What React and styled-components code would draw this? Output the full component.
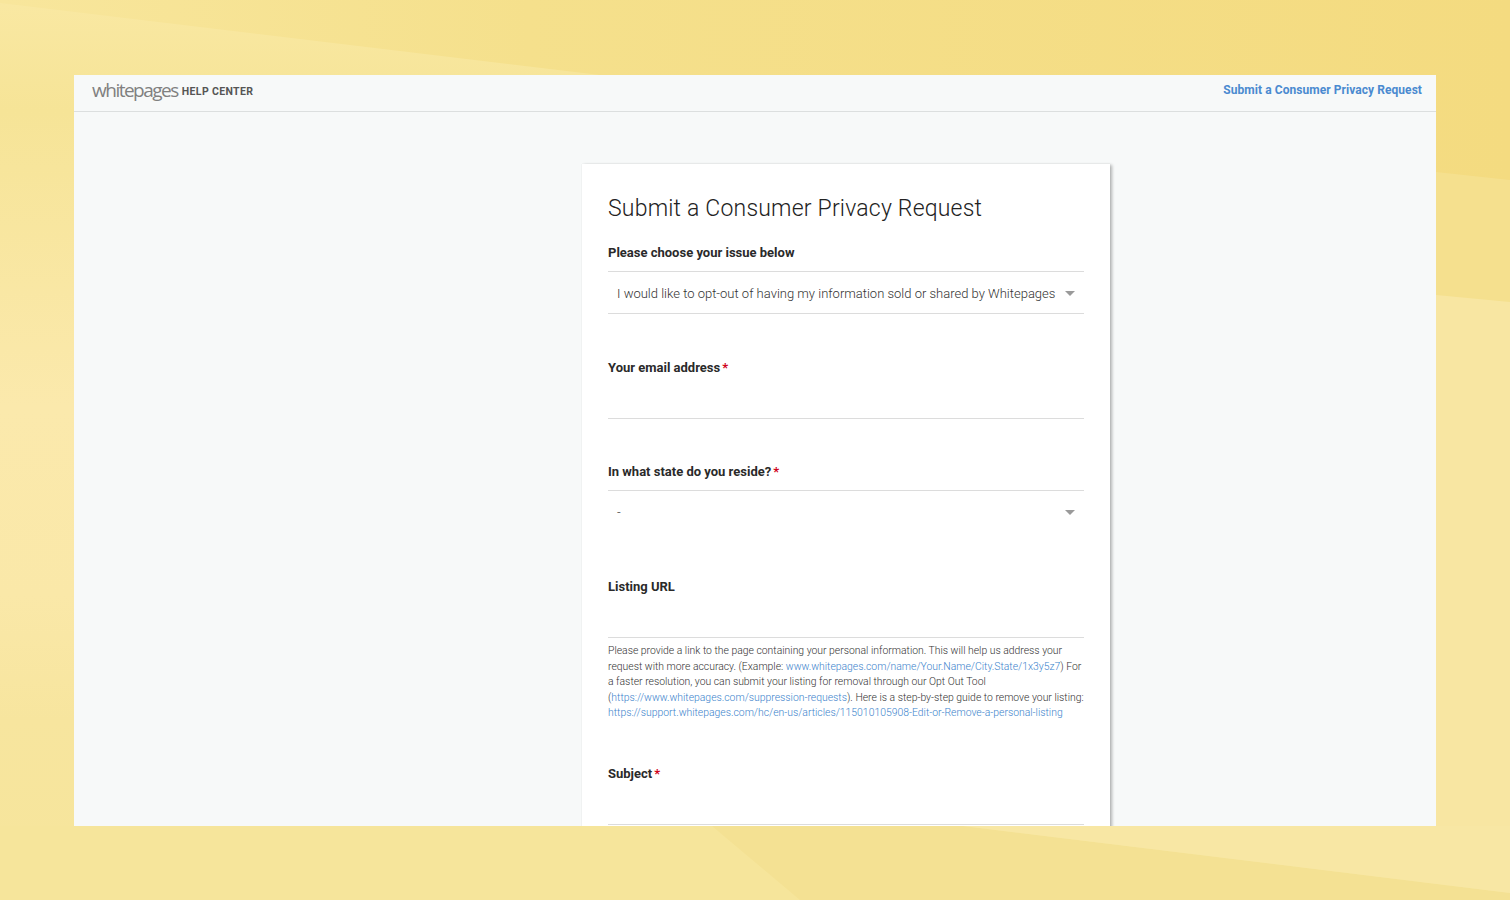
import styled, { createGlobalStyle } from 'styled-components'

const GlobalStyle = createGlobalStyle`
    html, body {
        margin: 0;
        height: 100%;
    }
    body {
        font-family: Roboto, "Liberation Sans", sans-serif;
        background: #f5e08c;
        overflow: hidden;
    }
`

const Backdrop = () => (
    <BackdropSvg viewBox="0 0 1510 900" preserveAspectRatio="none" aria-hidden="true">
        <defs>
            <linearGradient id="topBand" x1="0" x2="1" y1="0" y2="0">
                <stop offset="0" stopColor="#f8e69c" />
                <stop offset="0.35" stopColor="#f5e08c" />
                <stop offset="1" stopColor="#f4db80" />
            </linearGradient>
            <linearGradient id="leftBand" x1="0" x2="0" y1="0" y2="1">
                <stop offset="0" stopColor="#f9e8a2" />
                <stop offset="0.12" stopColor="#f6e497" />
                <stop offset="0.45" stopColor="#fbe9ac" />
                <stop offset="0.66" stopColor="#fae8a8" />
                <stop offset="0.8" stopColor="#f7e59e" />
                <stop offset="1" stopColor="#f6e59b" />
            </linearGradient>
        </defs>
        <rect width="1510" height="900" fill="url(#topBand)" />
        <polygon points="0,3 600,75 74,75 74,900 0,900" fill="url(#leftBand)" />
        <polygon points="1436,172 1510,180 1510,900 1436,900" fill="#f5e08e" />
        <polygon points="1436,295 1510,302 1510,900 1436,900" fill="#f8e6a2" />
        <rect y="826" width="1510" height="74" fill="#f6e59b" />
        <polygon points="712,826 963,826 1510,893 1510,900 800,900" fill="#f4e193" />
        <polygon points="963,826 1510,826 1510,893" fill="#f8e7a4" />
    </BackdropSvg>
)

const Logo = () => (
    <LogoWrap>
        <LogoWord>whitepages</LogoWord>
        <LogoSub>HELP CENTER</LogoSub>
    </LogoWrap>
)

const Caret = () => (
    <CaretSvg viewBox="0 0 10 5" aria-hidden="true">
        <polygon points="0,0 10,0 5,5" fill="#9a9a9a" />
    </CaretSvg>
)

const App = () => {
    return (
        <>
            <GlobalStyle />
            <Backdrop />
            <Stage>
                <Window>
                    <TopBar>
                        <Logo />
                        <TopLink href="#">Submit a Consumer Privacy Request</TopLink>
                    </TopBar>
                    <Content>
                        <Card>
                            <Title>Submit a Consumer Privacy Request</Title>

                            <Label>Please choose your issue below</Label>
                            <Select $closed>
                                <SelectText>I would like to opt-out of having my information sold or shared by Whitepages</SelectText>
                                <Caret />
                            </Select>

                            <Label $top={44}>Your email address<Star>*</Star></Label>
                            <TextInput />

                            <Label $top={43}>In what state do you reside?<Star>*</Star></Label>
                            <Select>
                                <SelectText>-</SelectText>
                                <Caret />
                            </Select>

                            <Label $top={44}>Listing URL</Label>
                            <TextInput />
                            <Help>
                                Please provide a link to the page containing your personal information. This will help us address your
                                request with more accuracy. (Example: <HelpLink href="#">www.whitepages.com/name/Your.Name/City.State/1x3y5z7</HelpLink>) For
                                a faster resolution, you can submit your listing for removal through our Opt Out Tool
                                (<HelpLink href="#">https://www.whitepages.com/suppression-requests</HelpLink>). Here is a step-by-step guide to remove your listing:
                                {' '}<HelpLink href="#">https://support.whitepages.com/hc/en-us/articles/115010105908-Edit-or-Remove-a-personal-listing</HelpLink>
                            </Help>

                            <Label $top={43}>Subject<Star>*</Star></Label>
                            <TextInput />
                        </Card>
                    </Content>
                </Window>
            </Stage>
        </>
    )
}

const BackdropSvg = styled.svg`
    position: fixed;
    inset: 0;
    width: 100%;
    height: 100%;
`
const Stage = styled.div`
    position: relative;
    height: 900px;
    padding: 75px 74px 74px;
    box-sizing: border-box;
`
const Window = styled.div`
    height: 751px;
    background: #f7f9f9;
    overflow: hidden;
`
const TopBar = styled.header`
    height: 36px;
    border-bottom: 1px solid #dcdfdf;
    display: flex;
    align-items: flex-start;
    justify-content: space-between;
    padding: 0 14px 0 18px;
`
const LogoWrap = styled.div`
    display: flex;
    align-items: center;
    gap: 4px;
    height: 31px;
`
const LogoWord = styled.span`
    padding-bottom: 2px;
    font-family: "Open Sans", Lato, sans-serif;
    font-size: 19px;
    line-height: 28px;
    letter-spacing: -1.5px;
    color: #808080;
`
const LogoSub = styled.span`
    padding-top: 2px;
    font-size: 10.5px;
    font-weight: 700;
    letter-spacing: 0.35px;
    color: #555;
`
const TopLink = styled.a`
    font-size: 12px;
    font-weight: 700;
    line-height: 30px;
    letter-spacing: 0.06px;
    color: #4a8ad0;
    text-decoration: none;
`
const Content = styled.main`
    display: flex;
    padding: 52px 0 0 508px;
`
const Card = styled.section`
    width: 528px;
    flex: none;
    box-sizing: border-box;
    padding: 29px 26px 40px;
    background: #fff;
    box-shadow: 2px 1px 3px rgba(0, 0, 0, 0.28), 0 0 1px rgba(0, 0, 0, 0.1);
`
const Title = styled.h1`
    margin: 0 0 18px;
    font-size: 23px;
    line-height: 32px;
    font-weight: 300;
    letter-spacing: 0.2px;
    color: #222;
`
const Label = styled.div`
    margin-top: ${p => p.$top || 0}px;
    font-size: 13px;
    font-weight: 700;
    line-height: 20px;
    color: #2a2a2a;
`
const Star = styled.span`
    margin-left: 2px;
    color: #d0021b;
`
const Select = styled.div`
    height: 40px;
    margin-top: 8px;
    padding: 1px 9px 0;
    display: flex;
    align-items: center;
    justify-content: space-between;
    border-top: 1px solid #dcdcdc;
    border-bottom: ${p => (p.$closed ? '1px solid #dcdcdc' : '1px solid transparent')};
`
const SelectText = styled.span`
    font-size: 13px;
    font-weight: 300;
    color: #333;
    white-space: nowrap;
`
const CaretSvg = styled.svg`
    width: 10px;
    height: 5px;
    flex: none;
`
const TextInput = styled.div`
    height: 30px;
    padding-top: 10px;
    border-bottom: 1px solid #dcdcdc;
`
const Help = styled.p`
    margin: 5px 0 0;
    font-size: 10.4px;
    font-weight: 300;
    line-height: 15.6px;
    color: #333;
`
const HelpLink = styled.a`
    color: #3b83cc;
    text-decoration: none;
`

export default App
